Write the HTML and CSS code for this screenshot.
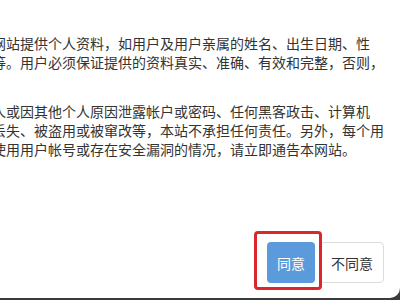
FILE: index.html
```html
<!DOCTYPE html>
<html lang="zh-CN">
<head>
<meta charset="utf-8">
<title>用户协议</title>
<link rel="stylesheet" href="styles.css">
</head>
<body>
<div class="modal">
  <div class="content">
    <p class="para">网站提供个人资料，如用户及用户亲属的姓名、出生日期、性<br>等。用户必须保证提供的资料真实、准确、有效和完整，否则，</p>
    <p class="para">人或因其他个人原因泄露帐户或密码、任何黑客政击、计算机<br>丢失、被盗用或被窜改等，本站不承担任何责任。另外，每个用<br>使用用户帐号或存在安全漏洞的情况，请立即通告本网站。</p>
  </div>
  <div class="actions">
    <button class="btn btn-primary" type="button">同意<span class="highlight"></span></button>
    <button class="btn btn-default" type="button">不同意</button>
  </div>
</div>
</body>
</html>
```
FILE: styles.css
```css
html, body {
  margin: 0;
  padding: 0;
  width: 400px;
  height: 300px;
  overflow: hidden;
  background: #3b3b3b;
}

.modal {
  box-sizing: border-box;
  width: 422px;
  height: 308px;
  margin: -10px 0 0 -22px;
  background: #fff;
  border-radius: 10px;
  display: flex;
  flex-direction: column;
  padding: 44px 16px 15px 14px;
  font-family: "Noto Sans CJK SC", "Microsoft YaHei", sans-serif;
  font-size: 14px;
  color: #333;
}

.content {
  flex: 1;
  display: flex;
  flex-direction: column;
  gap: 30px;
}

.para {
  margin: 0;
  line-height: 19px;
  white-space: nowrap;
}

.actions {
  display: flex;
  justify-content: flex-end;
  gap: 5px;
}

.btn {
  position: relative;
  box-sizing: border-box;
  height: 41px;
  padding: 0 10px;
  font-family: inherit;
  font-size: 14px;
  border-radius: 4px;
  cursor: pointer;
}

.btn-primary {
  width: 48px;
  border: none;
  background: #5b9bdb;
  color: #fff;
}

.btn-default {
  width: 64px;
  border: 1px solid #dcdcdc;
  background: #fff;
  color: #333;
}

.highlight {
  position: absolute;
  left: -13px;
  top: -11px;
  width: 68px;
  height: 59px;
  box-sizing: border-box;
  border: 3px solid #d8282b;
  border-radius: 4px;
  z-index: 2;
}
```
